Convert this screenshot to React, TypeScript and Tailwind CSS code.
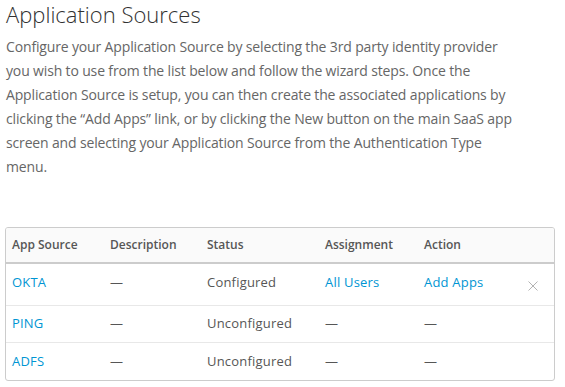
import React from "react";

const rows = [
  { src: "OKTA", desc: "—", status: "Configured", assign: "All Users", action: "Add Apps", link: true },
  { src: "PING", desc: "—", status: "Unconfigured", assign: "—", action: "—", link: false },
  { src: "ADFS", desc: "—", status: "Unconfigured", assign: "—", action: "—", link: false },
];

export default function App() {
  return (
    <div className="w-[565px] h-[387px] bg-white px-[6px] pt-0" style={{ fontFamily: '"Open Sans", sans-serif' }}>
      <h1 className="text-[22px] leading-[28px] text-[#313131] font-light">Application Sources</h1>
      <p className="mt-[7px] text-[14px] leading-[24px] text-[#666666] w-[550px] tracking-[-0.15px]">
        Configure your Application Source by selecting the 3rd party identity provider
        <br />
        you wish to use from the list below and follow the wizard steps. Once the
        <br />
        Application Source is setup, you can then create the associated applications by
        <br />
        clicking the “Add Apps” link, or by clicking the New button on the main SaaS app
        <br />
        screen and selecting your Application Source from the Authentication Type
        <br />
        menu.
      </p>
      <div className="mt-[48px] ml-[-1px] w-[550px] border border-[#cccccc] rounded-[3px] overflow-hidden">
        <div className="flex h-[36px] items-center bg-[#fafafa] border-b-2 border-[#cccccc] text-[12px] font-semibold text-[#565656]">
          <div className="w-[98px] pl-[6px]">App Source</div>
          <div className="w-[97px] pl-[6px]">Description</div>
          <div className="w-[118px] pl-[6px]">Status</div>
          <div className="w-[99px] pl-[6px]">Assignment</div>
          <div className="pl-[6px]">Action</div>
        </div>
        {rows.map((r, i) => (
          <div key={r.src} className={`flex items-center text-[13px] tracking-[0.2px] text-[#565656] ${i === 0 ? "h-[42px] pb-[4px]" : "h-[37px]"} ${i < rows.length - 1 ? "border-b border-[#e8e8e8]" : ""}`}>
            <div className="w-[98px] pl-[6px] text-[#0095d3]">{r.src}</div>
            <div className="w-[97px] pl-[6px]">{r.desc}</div>
            <div className="w-[118px] pl-[6px]">{r.status}</div>
            <div className={`w-[99px] pl-[6px] ${r.link ? "text-[#0095d3]" : ""}`}>{r.assign}</div>
            <div className={`w-[100px] pl-[6px] ${r.link ? "text-[#0095d3]" : ""}`}>{r.action}</div>
            {i === 0 && (
              <div className="ml-auto mr-[16px] mt-[6px]">
                <svg width="10" height="10" viewBox="0 0 10 10">
                  <path d="M0.5 0.5L9.5 9.5M9.5 0.5L0.5 9.5" stroke="#b3b3b3" strokeWidth="1" />
                </svg>
              </div>
            )}
          </div>
        ))}
      </div>
    </div>
  );
}
